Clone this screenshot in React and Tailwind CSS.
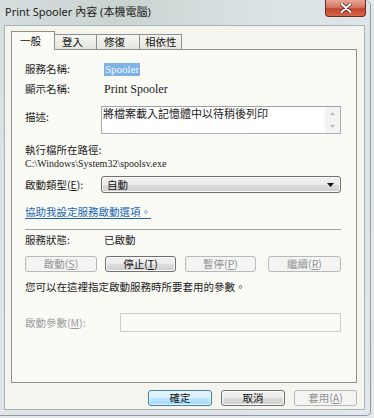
import React from "react";

const cjk = "font-['Noto_Sans_CJK_TC','Noto_Sans',sans-serif]";
const serif = "font-['Liberation_Serif','Noto_Sans_CJK_TC',serif]";

function Btn({ children, disabled, def, className = "" }) {
  let cls =
    "flex items-center justify-center h-[16px] rounded-[3px] text-[10.5px] leading-none " + cjk + " ";
  if (disabled) {
    cls += "border border-[#b5b9bc] bg-[#f4f4f2] text-[#8f9296] ";
  } else if (def) {
    cls +=
      "border border-[#3c7fb1] bg-[linear-gradient(#eaf6fd_0%,#d9f0fc_50%,#bee6fd_51%,#a7d9f5_100%)] text-[#111] shadow-[inset_0_0_0_1px_#e6f4fb] ";
  } else {
    cls +=
      "border border-[#707070] bg-[linear-gradient(#f2f2f2_0%,#ebebeb_50%,#dddddd_51%,#cfcfcf_100%)] text-[#111] shadow-[inset_0_0_0_1px_#fcfcfc] ";
  }
  return <div className={cls + className}>{children}</div>;
}

function U({ children }) {
  return <span className="underline underline-offset-1">{children}</span>;
}

export default function App() {
  return (
    <div className="w-[374px] h-[418px] overflow-hidden bg-[#e4e9ec] relative">
      <div className="w-[371px] h-[416px] flex flex-col rounded-tr-[6px] rounded-br-[5px] border-r border-b border-[#8d9aa3] bg-[radial-gradient(ellipse_at_30%_0%,#c9d3cf_0%,#dbe2e5_40%,#e1e7ea_100%)]">
        {/* title bar */}
        <div className="h-[25px] flex items-start shrink-0">
          <div className={"pl-[5px] pt-[5px] text-[11px] text-[#1b1b1b] leading-[14px] font-['Noto_Sans','Noto_Sans_CJK_TC',sans-serif]"}>
            Print Spooler 內容 (本機電腦)
          </div>
          <div className="ml-auto mr-[4px] w-[41px] h-[17px] rounded-b-[4px] border border-t-0 border-[#6d2a22] bg-[linear-gradient(#e8a493_0%,#d47a66_45%,#c4432c_55%,#d9674d_100%)] flex items-center justify-center">
            <svg width="12" height="10" viewBox="0 0 12 10">
              <path d="M1.5 1 L10.5 9 M10.5 1 L1.5 9" stroke="#5a2a22" strokeWidth="3.6" strokeLinecap="round" />
              <path d="M1.5 1 L10.5 9 M10.5 1 L1.5 9" stroke="#ffffff" strokeWidth="2" strokeLinecap="round" />
            </svg>
          </div>
        </div>
        {/* client area */}
        <div className="ml-[4px] mr-[5px] mb-[5px] flex-1 border border-[#a9b2b8] bg-[#f4f5ee] flex flex-col">
          <div className="pl-[6px] pr-[7px] pt-[5px] flex flex-col">
            {/* tabs */}
            <div className={"flex items-end h-[18px] text-[10.5px] text-[#111] " + cjk}>
              <div className="relative z-10 w-[44px] h-[19px] -mb-px border border-b-0 border-[#8e8f8f] bg-[#fbfbf6] pl-[8px] pt-[2px] leading-[14px]">
                一般
              </div>
              <div className="w-[42px] h-[15px] border border-l-0 border-b-0 border-[#8e8f8f] bg-[linear-gradient(#f6f6f2,#e6e6e0)] pl-[7px] leading-[14px]">
                登入
              </div>
              <div className="w-[43px] h-[15px] border border-l-0 border-b-0 border-[#8e8f8f] bg-[linear-gradient(#f6f6f2,#e6e6e0)] pl-[7px] leading-[14px]">
                修復
              </div>
              <div className="w-[42px] h-[15px] border border-l-0 border-b-0 border-[#8e8f8f] bg-[linear-gradient(#f6f6f2,#e6e6e0)] pl-[5px] leading-[14px]">
                相依性
              </div>
            </div>
            {/* panel */}
            <div className={"h-[334px] border border-[#8e8f8f] bg-[#fbfbf6] pl-[13px] pr-[15px] flex flex-col text-[10.5px] text-[#1a1a1a] " + cjk}>
              <div className="mt-[12px] h-[14px] flex items-center">
                <div className="w-[79px]">服務名稱:</div>
                <div className={"px-[1px] h-[13px] flex items-center bg-[#7fb3e6] text-[#f3f8ff] text-[11px] " + serif}>Spooler</div>
              </div>
              <div className="mt-[6px] h-[14px] flex items-center">
                <div className="w-[79px]">顯示名稱:</div>
                <div className={"text-[12px] " + serif}>Print Spooler</div>
              </div>
              <div className="mt-[10px] h-[28px] flex">
                <div className="w-[76px] pt-[4px] leading-[14px]">描述:</div>
                <div className="flex-1 border border-[#abadb3] border-t-[#9ea2a8] bg-white flex">
                  <div className="flex-1 pl-[1px] leading-[12px] text-[11px]">將檔案載入記憶體中以待稍後列印</div>
                  <div className="w-[15px] bg-[#f3f3f1] flex flex-col items-center justify-between py-[5px]">
                    <svg width="5" height="3" viewBox="0 0 5 3"><path d="M0 3 L2.5 0 L5 3Z" fill="#b9bcbf" /></svg>
                    <svg width="5" height="3" viewBox="0 0 5 3"><path d="M0 0 L2.5 3 L5 0Z" fill="#b9bcbf" /></svg>
                  </div>
                </div>
              </div>
              <div className="mt-[9px] h-[14px] flex items-center">執行檔所在路徑:</div>
              <div className={"h-[13px] flex items-center text-[10px] " + serif}>C:\Windows\System32\spoolsv.exe</div>
              <div className="mt-[6px] h-[17px] flex items-center">
                <div className="w-[76px]">啟動類型(<U>E</U>):</div>
                <div className="flex-1 h-[17px] rounded-[3px] border border-[#707070] bg-[linear-gradient(#f2f2f2_0%,#ebebeb_50%,#dddddd_51%,#cfcfcf_100%)] shadow-[inset_0_0_0_1px_#fcfcfc] flex items-center pl-[5px] pr-[6px] text-[#111]">
                  <span>自動</span>
                  <svg className="ml-auto" width="7" height="4" viewBox="0 0 7 4"><path d="M0 0 L7 0 L3.5 4Z" fill="#111" /></svg>
                </div>
              </div>
              <div className="mt-[12px] h-[14px] flex items-center">
                <span className="text-[#1a66b3] underline underline-offset-2">協助我設定服務啟動選項。</span>
              </div>
              <div className="mt-[10px] h-px bg-[#a0a0a0]" />
              <div className="mt-[3px] h-[14px] flex items-center">
                <div className="w-[79px]">服務狀態:</div>
                <div>已啟動</div>
              </div>
              <div className="mt-[9px] flex">
                <Btn disabled className="w-[72px]">啟動(<U>S</U>)</Btn>
                <Btn className="w-[71px] ml-[8px]">停止(<U>T</U>)</Btn>
                <Btn disabled className="w-[71px] ml-[9px]">暫停(<U>P</U>)</Btn>
                <Btn disabled className="w-[73px] ml-[12px]">繼續(<U>R</U>)</Btn>
              </div>
              <div className="mt-[8px] h-[14px] flex items-center">您可以在這裡指定啟動服務時所要套用的參數。</div>
              <div className="mt-[19px] h-[19px] flex items-center">
                <div className="w-[95px] text-[#9a9d9f]">啟動參數(<U>M</U>):</div>
                <div className="flex-1 h-[19px] border border-[#c9cbce] bg-[#fbfbf6]" />
              </div>
            </div>
            {/* bottom buttons */}
            <div className="mt-[7px] flex justify-end">
              <Btn def className="w-[64px]">確定</Btn>
              <Btn className="w-[64px] ml-[9px]">取消</Btn>
              <Btn disabled className="w-[63px] ml-[9px]">套用(<U>A</U>)</Btn>
            </div>
          </div>
        </div>
      </div>
    </div>
  );
}
